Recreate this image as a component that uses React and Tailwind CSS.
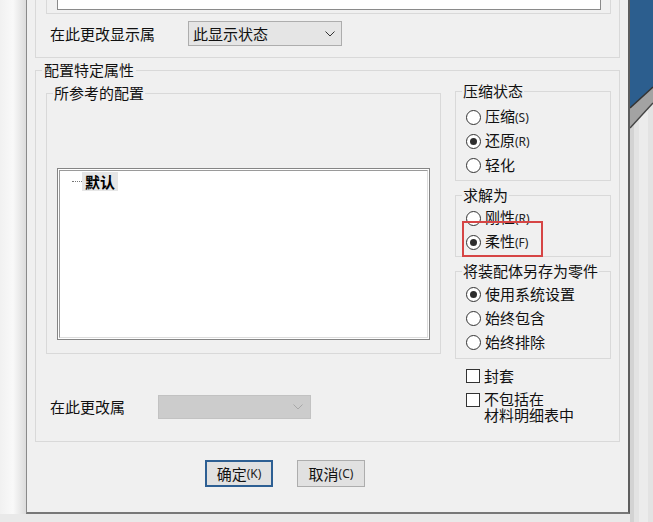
function Hint({ children }) {
  return <span className="font-['Noto_Sans',sans-serif] text-[12px] text-[#222]">{children}</span>;
}

function Radio({ checked, label, hint }) {
  return (
    <div className="flex h-[24px] items-center">
      <span className="flex h-[15px] w-[15px] items-center justify-center rounded-full border border-[#333] bg-white">
        {checked && <span className="h-[7px] w-[7px] rounded-full bg-[#2e2e2e]" />}
      </span>
      <span className="ml-[4px] leading-[20px]">
        {label}
        {hint && <Hint>{hint}</Hint>}
      </span>
    </div>
  );
}

function Group({ title, className = "", bodyClass = "", children }) {
  return (
    <fieldset className={`border border-[#d9d9d9] ${className}`}>
      <legend className="ml-[6px] px-[1px] text-[15px] leading-[20px]">{title}</legend>
      <div className={bodyClass}>{children}</div>
    </fieldset>
  );
}

function Chevron({ color }) {
  return (
    <svg width="10" height="6" viewBox="0 0 10 6" fill="none">
      <path d="M0.5 0.5 L5 5 L9.5 0.5" stroke={color} strokeWidth="1" />
    </svg>
  );
}

function Desktop() {
  return (
    <svg width="23" height="522" viewBox="0 0 23 522">
      <rect x="0" y="0" width="23" height="522" fill="#e3e3e3" />
      <rect x="0" y="0" width="4" height="522" fill="#d3d3d3" />
      <rect x="9" y="0" width="9" height="522" fill="#ececec" />
      <polygon points="0,0 23,0 23,87 0,108" fill="#2c5e8e" />
      <polygon points="0,108 23,87 23,103 0,128" fill="#a3a3a3" />
      <line x1="0" y1="108" x2="23" y2="87" stroke="#333" strokeWidth="1.5" />
      <line x1="0" y1="128" x2="23" y2="103" stroke="#444" strokeWidth="1.5" />
    </svg>
  );
}

export default function App() {
  return (
    <div className="flex h-[522px] w-[653px] overflow-hidden bg-[#e8e8e8] font-['Noto_Sans_CJK_SC','Noto_Sans',sans-serif] text-[15px] text-[#111]">
      <div className="flex w-[630px] flex-col">
        <div className="flex h-[514px]">
          <div className="w-[26px] bg-linear-to-r from-[#f1f1f1] via-[#f9f9f9] to-[#dcdcdc]" />
          <div className="flex w-[604px] flex-col border-l border-r-2 border-b-2 border-l-[#8a8a8a] border-r-[#5e5e5e] border-b-[#777] bg-[#f0f0f0] pl-[8px]">
            {/* display state group, top cut off */}
            <div className="-mt-[30px] w-[585px] border border-[#d9d9d9] pb-[11px]">
              <div className="ml-[10px] mt-[9px] flex h-[34px] w-[565px] items-end border border-[#d9d9d9] pb-[3px] pl-[10px]">
                <div className="h-[20px] w-[544px] border border-[#8a8a8a] bg-white" />
              </div>
              <div className="mt-[7px] flex h-[25px] items-center pl-[14px]">
                <span className="w-[138px] leading-[20px]">在此更改显示属</span>
                <div className="flex h-[25px] w-[154px] items-center justify-between border border-[#adadad] bg-[#e5e5e5] pl-[4px] pr-[6px]">
                  <span className="leading-[20px]">此显示状态</span>
                  <Chevron color="#333" />
                </div>
              </div>
            </div>

            {/* configuration-specific properties */}
            <fieldset className="mt-[2px] w-[585px] border border-[#d9d9d9]">
              <legend className="ml-[6px] px-[2px] leading-[20px]">配置特定属性</legend>
              <div className="flex h-[361px] items-start pl-[10px]">
                <div className="flex w-[395px] flex-col">
                  <Group title="所参考的配置" className="mt-[3px]" bodyClass="pb-[13px] pl-[10px] pr-[10px]">
                    <div className="mt-[65px] h-[172px] w-[373px] border border-[#858585] bg-white p-[1px]">
                      <div className="h-full border border-[#9a9a9a] border-b-[#dcdcdc] border-r-[#dcdcdc]">
                        <div className="mt-[1px] flex items-center pl-[12px]">
                          <span className="w-[10px] border-t border-dotted border-[#777]" />
                          <span className="bg-[#e6e6e6] px-[3px] font-bold leading-[19px] text-black">默认</span>
                        </div>
                      </div>
                    </div>
                  </Group>
                  <div className="mt-[41px] flex h-[24px] items-center pl-[4px]">
                    <span className="w-[108px] leading-[20px]">在此更改属</span>
                    <div className="flex h-[24px] w-[153px] items-center justify-end border border-[#c2c2c2] bg-[#cccccc] pr-[7px]">
                      <Chevron color="#a8a8a8" />
                    </div>
                  </div>
                </div>

                <div className="ml-[14px] mt-[1px] flex w-[156px] flex-col">
                  <Group title="压缩状态" bodyClass="pb-[3px] pl-[10px] pt-[4px]">
                    <Radio label="压缩" hint="(S)" />
                    <Radio label="还原" hint="(R)" checked />
                    <Radio label="轻化" />
                  </Group>
                  <Group title="求解为" className="mt-[4px]" bodyClass="pb-[2px] pl-[10px] pt-[1px]">
                    <Radio label="刚性" hint="(R)" />
                    <div className="relative">
                      <Radio label="柔性" hint="(F)" checked />
                      <div className="absolute -left-[4px] -top-[9px] h-[36px] w-[81px] border-2 border-[#d64545]" />
                    </div>
                  </Group>
                  <Group title="将装配体另存为零件" className="mt-[4px]" bodyClass="pb-[4px] pl-[10px] pt-[1px]">
                    <Radio label="使用系统设置" checked />
                    <Radio label="始终包含" />
                    <Radio label="始终排除" />
                  </Group>
                  <div className="mt-[5px] flex h-[24px] items-center pl-[11px]">
                    <span className="h-[14px] w-[14px] border border-[#333] bg-white" />
                    <span className="ml-[4px] leading-[20px]">封套</span>
                  </div>
                  <div className="mt-[3px] flex items-start pl-[11px]">
                    <span className="mt-[2px] h-[14px] w-[14px] border border-[#333] bg-white" />
                    <span className="ml-[4px] leading-[16px]">
                      不包括在
                      <br />
                      材料明细表中
                    </span>
                  </div>
                </div>
              </div>
            </fieldset>

            <div className="mt-[18px] flex gap-[24px] pl-[170px]">
              <button className="flex h-[27px] w-[68px] items-center justify-center border-2 border-[#2d5f93] bg-[#e1e1e1] leading-[20px]">
                确定<Hint>(K)</Hint>
              </button>
              <button className="flex h-[27px] w-[68px] items-center justify-center border border-[#adadad] bg-[#e1e1e1] leading-[20px]">
                取消<Hint>(C)</Hint>
              </button>
            </div>
          </div>
        </div>
        <div className="flex-1 bg-[#e9e9e9]" />
      </div>
      <Desktop />
    </div>
  );
}
